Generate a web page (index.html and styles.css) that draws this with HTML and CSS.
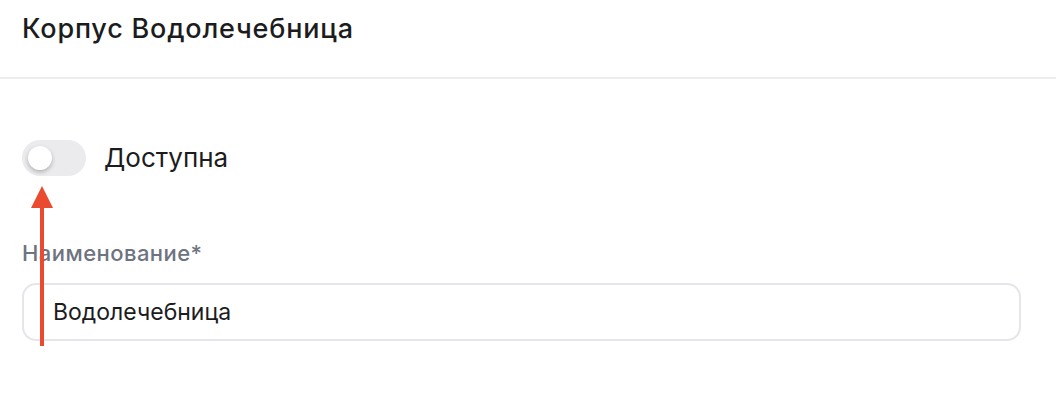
FILE: index.html
```html
<!DOCTYPE html>
<html lang="ru">
<head>
<meta charset="utf-8">
<link rel="stylesheet" href="styles.css">
</head>
<body>
<div class="page">
  <header class="header">
    <h1 class="title">Корпус Водолечебница</h1>
  </header>
  <main class="content">
    <div class="toggle-row">
      <span class="switch"><span class="knob"></span></span>
      <span class="toggle-label">Доступна</span>
    </div>
    <div class="field">
      <label class="field-label">Наименование*</label>
      <div class="input">Водолечебница</div>
    </div>
    <svg class="arrow" width="30" height="165" viewBox="0 0 30 165">
      <polygon points="13,0 2,22 24,22" fill="#ea4a2f"/>
      <rect x="11" y="20" width="4" height="140" fill="#ea4a2f"/>
    </svg>
  </main>
</div>
</body>
</html>
```

FILE: styles.css
```css
* { box-sizing: border-box; margin: 0; padding: 0; }
html, body { background: #fff; }
body {
  font-family: Inter, "Liberation Sans", "Noto Sans", sans-serif;
  color: #1c1c1e;
  width: 1056px;
  height: 412px;
  overflow: hidden;
}
.page { position: relative; }
.header {
  height: 79px;
  padding: 13px 22px 0;
  border-bottom: 2px solid #ededf0;
}
.title {
  font-size: 27px;
  font-weight: 500;
  line-height: 32px;
  letter-spacing: 0.8px;
}
.content {
  position: relative;
  padding: 61px 35px 0 22px;
}
.toggle-row {
  display: flex;
  align-items: center;
  gap: 18px;
  height: 36px;
}
.switch {
  width: 64px;
  height: 36px;
  border-radius: 18px;
  background: #ebebed;
  display: flex;
  align-items: center;
  padding-left: 6px;
}
.knob {
  width: 24px;
  height: 24px;
  border-radius: 50%;
  background: #fff;
  box-shadow: 0 2px 4px rgba(0,0,0,0.25);
}
.toggle-label {
  font-size: 26px;
  line-height: 32px;
  color: #1c1c1e;
}
.field { margin-top: 63px; }
.field-label {
  display: block;
  font-size: 22px;
  font-weight: 500;
  line-height: 28px;
  letter-spacing: 0.45px;
  color: #6e7380;
}
.input {
  margin-top: 16px;
  height: 58px;
  border: 2px solid #e6e6ea;
  border-radius: 14px;
  padding: 0 29px;
  display: flex;
  align-items: center;
  font-size: 23px;
  color: #1c1c1e;
}
.arrow {
  position: absolute;
  left: 29px;
  top: 107px;
}
```
